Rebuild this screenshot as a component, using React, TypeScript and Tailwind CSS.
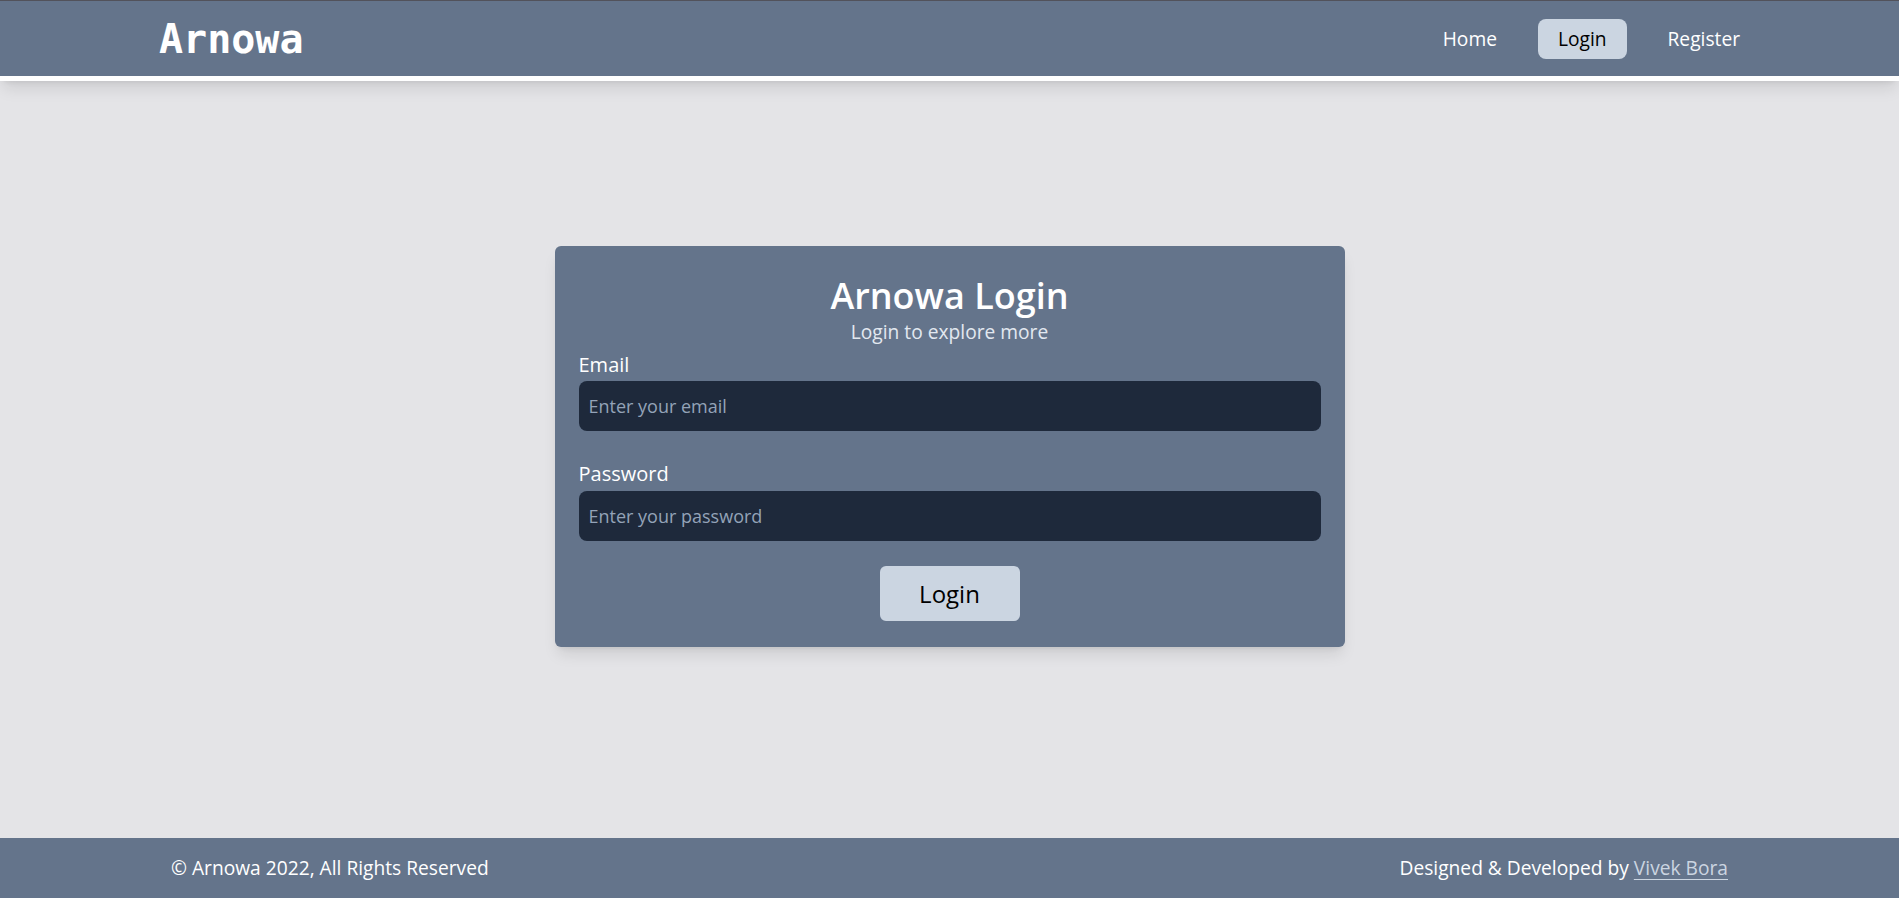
import React from "react";

export default function App() {
  const font = { fontFamily: "'Open Sans', Lato, sans-serif" };
  return (
    <div className="min-h-screen flex flex-col bg-[#e4e4e7]" style={font}>
      <header className="relative z-10 h-[81px] border-t border-[#52525b] bg-[#64748b] border-b-[5px] border-b-white shadow-lg flex items-center justify-between pl-[159px] pr-[139px]">
        <div className="text-[40px] font-bold text-white leading-none" style={{ fontFamily: "'DejaVu Sans Mono', monospace" }}>
          Arnowa
        </div>
        <nav className="flex items-center gap-[21px] text-[19.2px]">
          <a className="px-5 py-[6px] leading-7 rounded-lg text-white">Home</a>
          <a className="px-5 py-[6px] leading-7 rounded-lg bg-[#cbd5e1] text-black">Login</a>
          <a className="px-5 py-[6px] leading-7 rounded-lg text-white">Register</a>
        </nav>
      </header>
      <main className="flex-1 flex justify-center items-start pt-[165px]">
        <div className="w-[790px] bg-[#64748b] rounded-md shadow-lg px-6 pt-6 pb-[26px] flex flex-col">
          <h1 className="text-4xl font-semibold text-white text-center leading-10 mt-[6px]">Arnowa Login</h1>
          <p className="text-[19.2px] text-[#e2e8f0] text-center leading-7 mt-[2px]">Login to explore more</p>
          <label className="text-xl text-white leading-7 mt-[5px]">Email</label>
          <input
            className="mt-[2px] h-[50px] rounded-lg bg-[#1e293b] px-[10px] text-lg text-white placeholder:text-[#94a3b8] outline-none"
            placeholder="Enter your email"
            style={font}
          />
          <label className="text-xl text-white leading-7 mt-[29px]">Password</label>
          <input
            type="password"
            className="mt-[3px] h-[50px] rounded-lg bg-[#1e293b] px-[10px] text-lg text-white placeholder:text-[#94a3b8] outline-none"
            placeholder="Enter your password"
            style={font}
          />
          <div className="flex justify-center mt-[25px]">
            <button className="w-[140px] h-[55px] rounded-md bg-[#cbd5e1] text-2xl text-black" style={font}>
              Login
            </button>
          </div>
        </div>
      </main>
      <footer className="h-[60px] bg-[#64748b] flex items-center justify-between px-[171px] text-[19.2px] text-white">
        <span>© Arnowa 2022, All Rights Reserved</span>
        <span>
          Designed &amp; Developed by{" "}
          <a className="text-[#cbd5e1] underline underline-offset-4">Vivek Bora</a>
        </span>
      </footer>
    </div>
  );
}
